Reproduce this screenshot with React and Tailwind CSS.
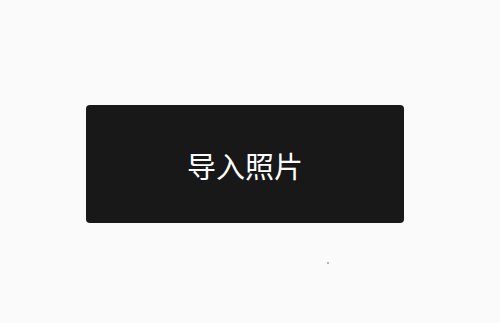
export default function App() {
  return (
    <div className="w-[500px] h-[323px] bg-[#fafafa] pt-[105px] pl-[86px] overflow-hidden" style={{ fontFamily: '"Noto Sans CJK SC", "Noto Sans", sans-serif' }}>
      <button className="w-[318px] h-[118px] rounded-[4px] bg-[#181818] flex items-center justify-center pt-[2px] text-white text-[29px] leading-none">
        导入照片
      </button>
      <div className="mt-[39px] ml-[241px] w-[2px] h-[2px] bg-[#b5b5b5]"></div>
    </div>
  );
}
